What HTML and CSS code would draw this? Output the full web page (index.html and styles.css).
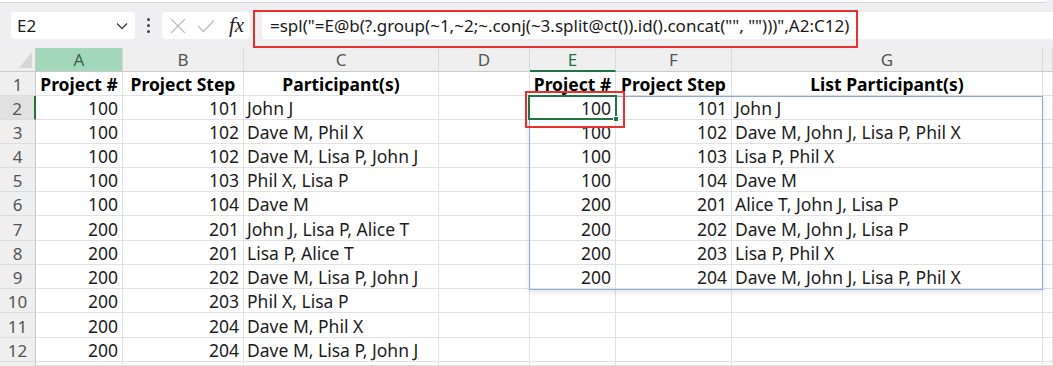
FILE: index.html
```html
<!DOCTYPE html>
<html>
<head>
<meta charset="utf-8">
<link rel="stylesheet" href="styles.css">
</head>
<body>
<div class="toolbar">
  <div class="ribbon-edge"></div>
  <div class="fbar">
    <div class="namebox">
      <span class="ref">E2</span>
      <svg class="chev" width="12" height="8" viewBox="0 0 12 8"><path d="M1 1.5 L6 6.5 L11 1.5" fill="none" stroke="#444" stroke-width="1.4"/></svg>
    </div>
    <div class="dots"><i></i><i></i><i></i></div>
    <div class="btns">
      <svg width="16" height="16" viewBox="0 0 16 16"><path d="M1 1 L15 15 M15 1 L1 15" stroke="#bdbdbd" stroke-width="1.3"/></svg>
      <svg width="18" height="14" viewBox="0 0 18 14"><path d="M1 7 L6.5 12.5 L17 1.5" fill="none" stroke="#bdbdbd" stroke-width="1.3"/></svg>
      <span class="fx">fx</span>
    </div>
    <div class="input">=spl("=E@b(?.group(~1,~2;~.conj(~3.split@ct()).id().concat("", "")))",A2:C12)</div>
    <div class="mark mark-formula"></div>
  </div>
</div>
<div class="sheet">
  <div class="grid">
    <div class="corner"><span class="tri"></span></div>
    <div class="ch ch-sel">A</div><div class="ch">B</div><div class="ch">C</div><div class="ch">D</div><div class="ch ch-act">E</div><div class="ch">F</div><div class="ch">G</div><div class="ch"></div>

    <div class="rh">1</div>
    <div class="c b">Project #</div><div class="c b">Project Step</div><div class="c b">Participant(s)</div><div class="c"></div><div class="c b">Project #</div><div class="c b">Project Step</div><div class="c b">List Participant(s)</div><div class="c"></div>

    <div class="rh rh-act">2</div>
    <div class="c n">100</div><div class="c n">101</div><div class="c t">John J</div><div class="c"></div><div class="c n">100</div><div class="c n">101</div><div class="c t">John J</div><div class="c"></div>

    <div class="rh">3</div>
    <div class="c n">100</div><div class="c n">102</div><div class="c t">Dave M, Phil X</div><div class="c"></div><div class="c n">100</div><div class="c n">102</div><div class="c t">Dave M, John J, Lisa P, Phil X</div><div class="c"></div>

    <div class="rh">4</div>
    <div class="c n">100</div><div class="c n">102</div><div class="c t">Dave M, Lisa P, John J</div><div class="c"></div><div class="c n">100</div><div class="c n">103</div><div class="c t">Lisa P, Phil X</div><div class="c"></div>

    <div class="rh">5</div>
    <div class="c n">100</div><div class="c n">103</div><div class="c t">Phil X, Lisa P</div><div class="c"></div><div class="c n">100</div><div class="c n">104</div><div class="c t">Dave M</div><div class="c"></div>

    <div class="rh">6</div>
    <div class="c n">100</div><div class="c n">104</div><div class="c t">Dave M</div><div class="c"></div><div class="c n">200</div><div class="c n">201</div><div class="c t">Alice T, John J, Lisa P</div><div class="c"></div>

    <div class="rh">7</div>
    <div class="c n">200</div><div class="c n">201</div><div class="c t">John J, Lisa P, Alice T</div><div class="c"></div><div class="c n">200</div><div class="c n">202</div><div class="c t">Dave M, John J, Lisa P</div><div class="c"></div>

    <div class="rh">8</div>
    <div class="c n">200</div><div class="c n">201</div><div class="c t">Lisa P, Alice T</div><div class="c"></div><div class="c n">200</div><div class="c n">203</div><div class="c t">Lisa P, Phil X</div><div class="c"></div>

    <div class="rh">9</div>
    <div class="c n">200</div><div class="c n">202</div><div class="c t">Dave M, Lisa P, John J</div><div class="c"></div><div class="c n">200</div><div class="c n">204</div><div class="c t">Dave M, John J, Lisa P, Phil X</div><div class="c"></div>

    <div class="rh">10</div>
    <div class="c n">200</div><div class="c n">203</div><div class="c t">Phil X, Lisa P</div><div class="c"></div><div class="c"></div><div class="c"></div><div class="c"></div><div class="c"></div>

    <div class="rh">11</div>
    <div class="c n">200</div><div class="c n">204</div><div class="c t">Dave M, Phil X</div><div class="c"></div><div class="c"></div><div class="c"></div><div class="c"></div><div class="c"></div>

    <div class="rh">12</div>
    <div class="c n">200</div><div class="c n">204</div><div class="c t">Dave M, Lisa P, John J</div><div class="c"></div><div class="c"></div><div class="c"></div><div class="c"></div><div class="c"></div>

    <div class="rh rh-last"></div>
    <div class="c"></div><div class="c"></div><div class="c"></div><div class="c"></div><div class="c"></div><div class="c"></div><div class="c"></div><div class="c"></div>
  </div>
  <div class="range"></div>
  <div class="active"><span class="handle"></span></div>
  <div class="mark mark-cell"></div>
</div>
</body>
</html>
```

FILE: styles.css
```css
* { box-sizing: border-box; }
html, body { margin: 0; padding: 0; }
body {
  width: 1053px;
  height: 366px;
  overflow: hidden;
  background: #ffffff;
  font-family: "Noto Sans", "Liberation Sans", sans-serif;
  color: #1a1a1a;
}

/* ---------- formula bar ---------- */
.toolbar {
  height: 48px;
  background: #efeff1;
  position: relative;
}
.ribbon-edge {
  height: 3px;
  margin: 0 6px 0 0;
  background: #ffffff;
  border-bottom: 1px solid #d4d4d6;
  border-radius: 0 0 4px 0;
}
.fbar {
  display: flex;
  align-items: center;
  height: 27px;
  margin-top: 9px;
  padding-left: 11px;
}
.namebox {
  width: 124px;
  height: 27px;
  background: #fff;
  border-radius: 4px;
  display: flex;
  align-items: center;
  justify-content: space-between;
  padding: 0 7px 0 6px;
}
.ref { font-size: 17px; color: #1a1a1a; }
.dots {
  width: 27px;
  display: flex;
  flex-direction: column;
  align-items: center;
  gap: 3px;
}
.dots i {
  display: block;
  width: 3px;
  height: 3px;
  border-radius: 50%;
  background: #444;
}
.btns {
  width: 88px;
  height: 27px;
  background: #fff;
  border-radius: 4px;
  display: flex;
  align-items: center;
  padding-left: 8px;
  gap: 11px;
}
.fx {
  font-family: "Liberation Serif", "DejaVu Serif", serif;
  font-style: italic;
  font-size: 21px;
  color: #222;
  margin-left: 3px;
  line-height: 1;
}
.input {
  flex: 1;
  height: 27px;
  margin-left: 12px;
  background: #fff;
  border-radius: 4px 0 0 4px;
  padding-left: 8px;
  font-size: 17px;
  line-height: 27px;
  white-space: nowrap;
  overflow: hidden;
  color: #1a1a1a;
}
.mark {
  position: absolute;
  border: 2px solid #e8312f;
  pointer-events: none;
}
.mark-formula {
  left: 253px;
  top: 10px;
  width: 605px;
  height: 38px;
}

/* ---------- sheet ---------- */
.sheet {
  position: relative;
  height: 318px;
  overflow: hidden;
}
.grid {
  display: grid;
  grid-template-columns: 36px 87px 121px 195px 91px 86px 116px 311px 1fr;
  grid-template-rows: 24px 24px 24px 24px 24px 24px 24px 25px 24px 24px 24px 25px 24px 4px;
}
.corner {
  background: #efefef;
  border-right: 1px solid #c9c9c9;
  border-bottom: 1px solid #c9c9c9;
  position: relative;
}
.tri {
  position: absolute;
  right: 3px;
  bottom: 3px;
  width: 0;
  height: 0;
  border-left: 13px solid transparent;
  border-bottom: 16px solid #d6d6d6;
}
.ch {
  background: #efefef;
  border-right: 1px solid #d9d9d9;
  border-bottom: 1px solid #c9c9c9;
  text-align: center;
  font-size: 17px;
  line-height: 23px;
  color: #555;
}
.ch-sel { background: #a3d7b9; color: #3f5f4d; }
.ch-act { color: #217346; border-bottom: 2px solid #217346; }
.rh {
  background: #efefef;
  border-right: 1px solid #c9c9c9;
  border-bottom: 1px solid #dcdcdc;
  text-align: center;
  font-size: 17px;
  color: #555;
  display: flex;
  align-items: flex-end;
  justify-content: center;
  line-height: 21px;
}
.rh-act { background: #e1e1e1; border-right: 2px solid #217346; }
.rh-last { border-bottom: 0; }
.c {
  border-right: 1px solid #e1e1e1;
  border-bottom: 1px solid #e1e1e1;
  font-size: 17.5px;
  line-height: 21px;
  white-space: nowrap;
  display: flex;
  align-items: flex-end;
  color: #1c1c1c;
  min-width: 0;
}
.b {
  font-weight: 700;
  color: #000;
  justify-content: center;
  overflow: visible;
}
.n { justify-content: flex-end; padding-right: 4px; }
.t { padding-left: 3px; }

.range {
  position: absolute;
  left: 529px;
  top: 48px;
  width: 514px;
  height: 194px;
  border: 1.5px solid #8eabdc;
  box-shadow: 0 2px 6px rgba(0, 0, 0, 0.12);
  pointer-events: none;
}
.active {
  position: absolute;
  left: 528px;
  top: 47px;
  width: 89px;
  height: 25px;
  border: 2px solid #217346;
}
.handle {
  position: absolute;
  right: -4px;
  bottom: -4px;
  width: 6px;
  height: 6px;
  background: #217346;
  border: 1px solid #fff;
}
.mark-cell {
  left: 525px;
  top: 43px;
  width: 100px;
  height: 37px;
}
```
